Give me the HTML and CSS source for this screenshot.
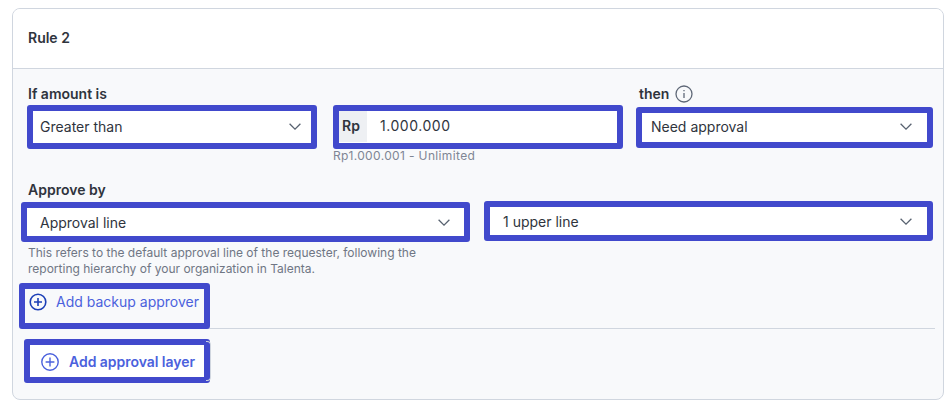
FILE: index.html
```html
<!DOCTYPE html>
<html lang="en">
<head>
<meta charset="utf-8">
<title>Rule 2</title>
<link rel="stylesheet" href="styles.css">
</head>
<body>
<section class="card">
  <header class="card-head">Rule 2</header>
  <div class="card-body">
    <div class="row-amount">
      <div class="col col-a">
        <label class="label label-first">If amount is</label>
        <div class="box select">
          <span>Greater than</span>
          <svg class="chev" viewBox="0 0 12 7"><path d="M.6.7 6 6.1 11.4.7"/></svg>
        </div>
      </div>
      <div class="col col-b">
        <label class="label">&nbsp;</label>
        <div class="box money">
          <span class="addon">Rp</span>
          <span class="value">1.000.000</span>
        </div>
        <p class="hint hint-range">Rp1.000.001 - Unlimited</p>
      </div>
      <div class="col col-c">
        <label class="label label-then">then
          <svg class="info" viewBox="0 0 18 18"><circle cx="9" cy="9" r="8"/><path d="M9 8v5M9 5v1.2"/></svg>
        </label>
        <div class="box select box-short">
          <span>Need approval</span>
          <svg class="chev" viewBox="0 0 12 7"><path d="M.6.7 6 6.1 11.4.7"/></svg>
        </div>
      </div>
    </div>

    <label class="label label-approve">Approve by</label>
    <div class="row-approve">
      <div class="col-line">
        <div class="box select box-line">
          <span>Approval line</span>
          <svg class="chev" viewBox="0 0 12 7"><path d="M.6.7 6 6.1 11.4.7"/></svg>
        </div>
        <p class="hint hint-line">This refers to the default approval line of the requester, following the reporting hierarchy of your organization in Talenta.</p>
      </div>
      <div class="box select box-upper">
        <span>1 upper line</span>
        <svg class="chev" viewBox="0 0 12 7"><path d="M.6.7 6 6.1 11.4.7"/></svg>
      </div>
    </div>

    <div class="backup">
      <svg class="plus plus-dark" viewBox="0 0 18 18"><circle cx="9" cy="9" r="7.8"/><path d="M9 5v8M5 9h8"/></svg>
      <span>Add backup approver</span>
    </div>
    <hr class="divider">
    <div class="layer">
      <svg class="plus plus-light" viewBox="0 0 18 18"><circle cx="9" cy="9" r="8.2"/><path d="M9 4.6v8.8M4.6 9h8.8"/></svg>
      <span>Add approval layer</span>
    </div>
  </div>
</section>
</body>
</html>
```

FILE: styles.css
```css
* { box-sizing: border-box; }

html, body { margin: 0; padding: 0; background: #fff; }

body {
  font-family: Inter, "Liberation Sans", sans-serif;
  font-size: 14px;
  color: #2f343d;
}

.card {
  width: 932px;
  height: 392px;
  margin: 8px 0 0 12px;
  border: 1px solid #d0d6df;
  border-radius: 8px;
  background: #f8f9fb;
  overflow: hidden;
}

.card-head {
  height: 60px;
  padding: 20px 15px 0;
  line-height: 18px;
  font-weight: 600;
  font-size: 14px;
  background: #fff;
  border-bottom: 1px solid #d0d6df;
}

.card-body { padding: 16px 0 0 6px; }

.row-amount { display: flex; height: 95px; }

.col-a { width: 290px; margin-left: 8px; }
.col-b { width: 290px; margin-left: 16px; }
.col-c { width: 297px; margin-left: 13px; }

.label {
  display: block;
  height: 20px;
  line-height: 20px;
  font-weight: 600;
  font-size: 14px;
}

.label-first { padding-left: 1px; line-height: 18px; }

.label-then {
  display: flex;
  align-items: center;
  gap: 6px;
  height: 22px;
  padding: 0 0 4px 3px;
  line-height: 18px;
}

.label-approve { margin-left: 9px; }

.info { width: 18px; height: 18px; fill: none; stroke: #5f6877; stroke-width: 1.3; }

.box {
  border: 6px solid #4149cc;
  border-radius: 3px;
  background: #fff;
}

.select {
  display: flex;
  align-items: center;
  justify-content: space-between;
  height: 44px;
  padding: 0 10px 2px 7px;
  font-size: 14px;
}

.chev { width: 12px; height: 7px; fill: none; stroke: #5a6472; stroke-width: 1.3; }

.money {
  display: flex;
  height: 44px;
  font-size: 14px;
}

.addon {
  width: 28px;
  height: 31px;
  padding-left: 3px;
  line-height: 30px;
  font-weight: 600;
  background: #eef0f3;
}

.value {
  margin-left: 13px;
  line-height: 30px;
  letter-spacing: 0.55px;
}

.hint {
  margin: 0;
  font-size: 12px;
  line-height: 16px;
  color: #7f8694;
}

.hint-range { margin-top: -1px; letter-spacing: 0.36px; }

.row-approve {
  display: flex;
  align-items: flex-start;
  margin-top: 2px;
  margin-left: 2px;
  height: 81px;
}

.col-line { width: 449px; }

.box-short { height: 41px; padding-left: 9px; padding-right: 15px; }
.box-line { height: 40px; padding: 0 14px 0 13px; }

.hint-line {
  width: 412px;
  margin: 3px 0 0 7px;
  color: #6f7684;
}

.box-upper {
  width: 449px;
  height: 40px;
  margin: -1px 0 0 14px;
  padding: 0 15px 0 13px;
}

.backup {
  position: relative;
  z-index: 1;
  display: flex;
  align-items: flex-start;
  gap: 9px;
  width: 191px;
  height: 46px;
  padding: 4px 0 0 4px;
  border: 6px solid #4149cc;
  border-radius: 3px;
  background: #f8f9fb;
  color: #4b61dd;
  line-height: 18px;
}

.plus { flex: none; fill: none; }
.plus-dark { width: 18px; height: 18px; stroke: #1c3fb7; stroke-width: 1.6; }
.plus-light { width: 18px; height: 18px; stroke: #4b61dd; stroke-width: 1.4; }

.divider {
  width: 909px;
  height: 1px;
  margin: -1px 0 0 7px;
  border: 0;
  background: #d0d6df;
}

.layer {
  position: relative;
  display: flex;
  align-items: center;
  gap: 10px;
  width: 186px;
  height: 44px;
  margin: 10px 0 0 5px;
  padding: 1px 0 0 11px;
  border: 6px solid #4149cc;
  border-radius: 3px;
  background: #fff;
  color: #4b61dd;
  font-weight: 600;
  font-size: 14px;
  letter-spacing: -0.04px;
}

.layer::after {
  content: "";
  position: absolute;
  top: -4px;
  right: -7px;
  bottom: -4px;
  width: 4px;
  border: 1px solid #d0d6df;
  border-left: 0;
  border-radius: 0 4px 4px 0;
}
```
